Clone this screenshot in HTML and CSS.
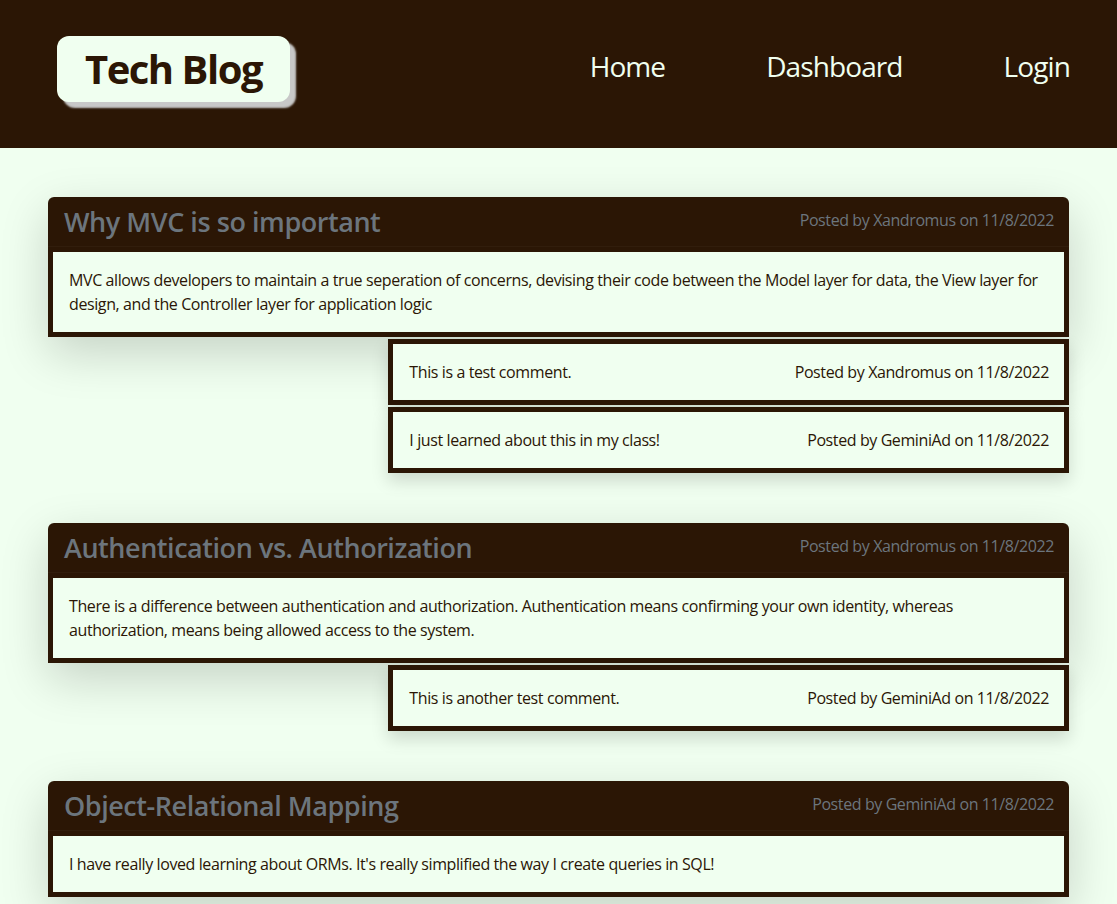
FILE: index.html
```html
<!DOCTYPE html>
<html lang="en">
<head>
<meta charset="utf-8">
<title>Tech Blog</title>
<link rel="stylesheet" href="styles.css">
</head>
<body>
<header class="site-header">
  <a class="brand" href="#">Tech Blog</a>
  <nav class="nav">
    <a class="nav-link" href="#">Home</a>
    <a class="nav-link" href="#">Dashboard</a>
    <a class="nav-link" href="#">Login</a>
  </nav>
</header>
<main class="posts">
  <section class="post-group">
    <article class="post-card">
      <div class="post-header">
        <h3 class="post-title">Why MVC is so important</h3>
        <span class="post-meta">Posted by Xandromus on 11/8/2022</span>
      </div>
      <div class="post-body">
        <p>MVC allows developers to maintain a true seperation of concerns, devising their code between the Model layer for data, the View layer for design, and the Controller layer for application logic</p>
      </div>
    </article>
    <div class="comments">
      <div class="comment">
        <p>This is a test comment.</p>
        <span>Posted by Xandromus on 11/8/2022</span>
      </div>
      <div class="comment">
        <p>I just learned about this in my class!</p>
        <span>Posted by GeminiAd on 11/8/2022</span>
      </div>
    </div>
  </section>
  <section class="post-group">
    <article class="post-card">
      <div class="post-header">
        <h3 class="post-title">Authentication vs. Authorization</h3>
        <span class="post-meta">Posted by Xandromus on 11/8/2022</span>
      </div>
      <div class="post-body">
        <p>There is a difference between authentication and authorization. Authentication means confirming your own identity, whereas authorization, means being allowed access to the system.</p>
      </div>
    </article>
    <div class="comments">
      <div class="comment">
        <p>This is another test comment.</p>
        <span>Posted by GeminiAd on 11/8/2022</span>
      </div>
    </div>
  </section>
  <section class="post-group">
    <article class="post-card">
      <div class="post-header">
        <h3 class="post-title">Object-Relational Mapping</h3>
        <span class="post-meta">Posted by GeminiAd on 11/8/2022</span>
      </div>
      <div class="post-body">
        <p>I have really loved learning about ORMs. It's really simplified the way I create queries in SQL!</p>
      </div>
    </article>
  </section>
</main>
</body>
</html>
```

FILE: styles.css
```css
* { box-sizing: border-box; }

html, body {
  margin: 0;
  padding: 0;
}

body {
  background: #f0fff0;
  color: #2b1605;
  font-family: "Open Sans", "Noto Sans", sans-serif;
  font-size: 16px;
  line-height: 24px;
  letter-spacing: -0.4px;
}

.site-header {
  height: 148px;
  background: #2b1605;
  display: flex;
  align-items: center;
  justify-content: space-between;
  padding: 0 47px 0 57px;
}

.brand {
  width: 233px;
  height: 66px;
  border-radius: 12px;
  background: #f0fff0;
  color: #2b1605;
  text-decoration: none;
  font-weight: 700;
  font-size: 40px;
  letter-spacing: -1.5px;
  display: flex;
  align-items: center;
  justify-content: center;
  box-shadow: 6px 6px 2px #c8c8c8;
  margin-bottom: 10px;
}

.nav {
  display: flex;
  gap: 101px;
  margin-bottom: 16px;
}

.nav-link {
  color: #f0fff0;
  text-decoration: none;
  font-size: 28px;
  line-height: 34px;
  letter-spacing: -0.9px;
}

.posts {
  padding: 49px 48px 0;
}

.post-group {
  margin-bottom: 50px;
}

.post-card {
  border-radius: 6px 6px 0 0;
  overflow: hidden;
  box-shadow: 0 16px 48px rgba(0, 0, 0, 0.175);
}

.post-header {
  height: 50px;
  background: #2b1605;
  border-bottom: 1px solid rgba(255, 255, 255, 0.03);
  display: flex;
  align-items: center;
  justify-content: space-between;
  padding: 0 15px 0 16px;
}

.post-title {
  margin: 0;
  color: #6c757d;
  font-size: 27px;
  font-weight: 600;
  line-height: 33px;
  letter-spacing: -0.45px;
}

.post-meta {
  color: #6c757d;
  font-size: 16px;
  margin-bottom: 4px;
}

.post-body {
  background: #f0fff0;
  border: 5px solid #2b1605;
  padding: 16px;
}

.post-body p {
  margin: 0;
}

.comments {
  display: flex;
  flex-direction: column;
  align-items: flex-end;
  gap: 2px;
  margin-top: 2px;
}

.comment {
  width: 66.667%;
  background: #f0fff0;
  border: 5px solid #2b1605;
  padding: 16px 15px 16px 16px;
  display: flex;
  justify-content: space-between;
  box-shadow: 0 8px 16px rgba(0, 0, 0, 0.15);
}

.comment p {
  margin: 0;
}
```
